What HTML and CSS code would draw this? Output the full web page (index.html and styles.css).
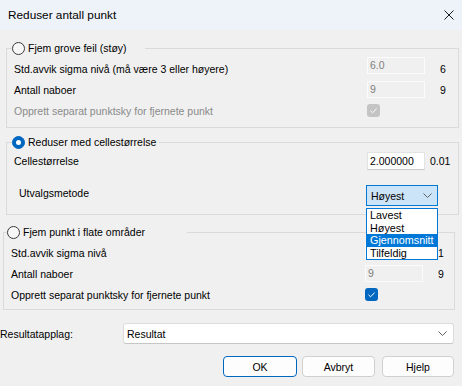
FILE: index.html
```html
<!DOCTYPE html>
<html lang="no">
<head>
    <meta charset="UTF-8">
    <meta name="viewport" content="width=device-width, initial-scale=1.0">
    <title>Reduser antall punkt</title>
    <link rel="stylesheet" href="styles.css">
</head>
<body>
    <div class="dialog">
        <div class="titlebar">
            <span class="title">Reduser antall punkt</span>
            <svg class="close" width="10" height="10" viewBox="0 0 10 10">
                <path d="M0.5 0.5 L9.5 9.5 M9.5 0.5 L0.5 9.5" stroke="#1a1a1a" stroke-width="1" fill="none"/>
            </svg>
        </div>

        <div class="content">
            <!-- Gruppe 1 -->
            <fieldset class="group g1">
                <legend class="legend l1"><span class="radio"></span>Fjem grove feil (støy)</legend>
                <div class="row">
                    <span class="label">Std.avvik sigma nivå (må være 3 eller høyere)</span>
                    <span class="field disabled up">6.0</span>
                    <span class="value">6</span>
                </div>
                <div class="row">
                    <span class="label">Antall naboer</span>
                    <span class="field disabled">9</span>
                    <span class="value">9</span>
                </div>
                <div class="row">
                    <span class="label muted">Opprett separat punktsky for fjernete punkt</span>
                    <span class="check-cell"><span class="check off"><svg width="13" height="13" viewBox="0 0 13 13"><path d="M3.5 6.8 L5.6 8.8 L9.6 4.6" stroke="#fff" stroke-width="1" fill="none"/></svg></span></span>
                    <span class="value"></span>
                </div>
            </fieldset>

            <!-- Gruppe 2 -->
            <fieldset class="group g2">
                <legend class="legend l2"><span class="radio on"></span>Reduser med cellestørrelse</legend>
                <div class="row r-cell">
                    <span class="label">Cellestørrelse</span>
                    <span class="field edit">2.000000</span>
                    <span class="value small">0.01</span>
                </div>
                <div class="row r-method">
                    <span class="label indent">Utvalgsmetode</span>
                    <div class="combo-wrap">
                        <div class="combo open">
                            <span>Høyest</span>
                            <svg width="9" height="5" viewBox="0 0 9 5"><path d="M0.5 0.5 L4.5 4.5 L8.5 0.5" stroke="#606060" fill="none"/></svg>
                        </div>
                        <ul class="droplist">
                            <li>Lavest</li>
                            <li>Høyest</li>
                            <li class="selected">Gjennomsnitt</li>
                            <li>Tilfeldig</li>
                        </ul>
                    </div>
                    <span class="spacer"></span>
                </div>
            </fieldset>

            <!-- Gruppe 3 -->
            <fieldset class="group g3">
                <legend class="legend l3"><span class="radio"></span>Fjem punkt i flate områder</legend>
                <div class="row">
                    <span class="label">Std.avvik sigma nivå</span>
                    <!-- feltet ligger skjult under nedtrekkslisten -->
                    <span class="field disabled up"></span>
                    <span class="value">1</span>
                </div>
                <div class="row">
                    <span class="label">Antall naboer</span>
                    <span class="field disabled">9</span>
                    <span class="value">9</span>
                </div>
                <div class="row">
                    <span class="label">Opprett separat punktsky for fjernete punkt</span>
                    <span class="check-cell"><span class="check on"><svg width="13" height="13" viewBox="0 0 13 13"><path d="M3.5 6.8 L5.6 8.8 L9.6 4.6" stroke="#fff" stroke-width="1" fill="none"/></svg></span></span>
                    <span class="value"></span>
                </div>
            </fieldset>

            <div class="result-row">
                <span class="result-label">Resultatapplag:</span>
                <div class="combo plain">
                    <span>Resultat</span>
                    <svg width="9" height="5" viewBox="0 0 9 5"><path d="M0.5 0.5 L4.5 4.5 L8.5 0.5" stroke="#606060" fill="none"/></svg>
                </div>
            </div>

            <div class="buttons">
                <button class="btn default">OK</button>
                <button class="btn cancel">Avbryt</button>
                <button class="btn help">Hjelp</button>
            </div>
        </div>
    </div>
</body>
</html>
```

FILE: styles.css
```css
* {
    box-sizing: border-box;
}

body {
    margin: 0;
    font-family: "Liberation Sans", Arial, sans-serif;
    font-size: 10.5px;
    color: #000;
    background-color: #f0f0f0;
}

.dialog {
    width: 462px;
    height: 386px;
    background-color: #f0f0f0;
    overflow: hidden;
}

.titlebar {
    height: 30px;
    background-color: #eef3f9;
    display: flex;
    justify-content: space-between;
    align-items: center;
    padding: 0 8px;
}

.title {
    font-size: 11.8px;
    color: #000;
}

.content {
    padding-top: 11px;
}

/* gruppebokser */
.group {
    margin: 0;
    padding: 0 0 6px 0;
    border: 1px solid #dadada;
    min-width: 0;
}

.g1 {
    margin-left: 6px;
    width: 453px;
}

.g2 {
    margin-left: 6px;
    margin-top: 7px;
    width: 453px;
    padding-top: 1px;
    padding-bottom: 7px;
}

.g3 {
    margin-left: 3px;
    margin-top: 10px;
    width: 452px;
    padding-bottom: 4px;
}

.legend {
    display: flex;
    align-items: center;
    height: 14px;
    padding: 0;
    margin-left: 5px;
    line-height: 14px;
}

.l1 { padding-right: 18px; }
.l2 { padding-right: 3px; }
.l3 { margin-left: 3px; padding-right: 42px; }

.radio {
    width: 13px;
    height: 13px;
    border: 1px solid #3a3a3a;
    border-radius: 50%;
    background-color: #f7f7f7;
    margin-right: 3px;
    position: relative;
}

.radio.on {
    border-color: #0067c0;
    background-color: #0067c0;
}

.radio.on::after {
    content: "";
    position: absolute;
    left: 3px;
    top: 3px;
    width: 5px;
    height: 5px;
    border-radius: 50%;
    background-color: #fff;
}

.row {
    display: flex;
    align-items: center;
    height: 21px;
    padding-left: 7px;
}

.g1 .row:first-of-type,
.g3 .row:first-of-type {
    margin-top: 3px;
}

.label {
    flex: 1;
    white-space: nowrap;
}

.label.indent {
    padding-left: 5px;
    margin-bottom: 5px;
}

.muted {
    color: #8a8a8a;
}

.field {
    width: 58px;
    height: 17px;
    line-height: 15px;
    padding-left: 2px;
    border: 1px solid #fbfbfb;
}

.field.up {
    margin-bottom: 6px;
}

.field.disabled {
    background-color: #f0f0f0;
    color: #808080;
}

.field.edit {
    height: 18px;
    line-height: 16px;
    background-color: #fff;
    border: 1px solid #e3e3e3;
    border-bottom-color: #c8c8c8;
}

.value {
    width: 33px;
    padding-left: 15px;
}

.g3 .value {
    width: 31px;
}

.value.small {
    padding-left: 5px;
}

.check-cell {
    width: 58px;
    display: flex;
}

.check {
    width: 13px;
    height: 13px;
    border-radius: 3px;
    display: flex;
}

.check.off {
    background-color: #c4c4c4;
}

.check.on {
    background-color: #0067c0;
}

/* utvalgsmetode */
.r-method {
    margin-top: 13px;
    height: 23px;
}

.combo-wrap {
    position: relative;
    width: 72px;
    margin-left: -1px;
}

.combo {
    display: flex;
    justify-content: space-between;
    align-items: center;
    height: 21px;
    padding: 0 5px 0 4px;
}

.combo.open {
    background-color: #cce4f7;
    border: 1px solid #0078d4;
}

.spacer {
    width: 20px;
}

.droplist {
    position: absolute;
    top: 23px;
    left: 0;
    width: 72px;
    margin: 0;
    padding: 0;
    list-style: none;
    background-color: #fff;
    border: 1px solid #0078d7;
    z-index: 10;
}

.droplist li {
    height: 12.5px;
    line-height: 12.5px;
    padding-left: 3px;
    font-size: 10.8px;
}

.droplist li.selected {
    background-color: #0078d7;
    color: #fff;
}

/* resultat */
.result-row {
    display: flex;
    align-items: center;
    margin-top: 13px;
    height: 21px;
}

.result-label {
    width: 123px;
}

.combo.plain {
    width: 331px;
    background-color: #fff;
    border: 1px solid #dcdcdc;
    border-bottom-color: #c6c6c6;
    border-radius: 3px;
    padding: 0 6px 0 3px;
}

.buttons {
    display: flex;
    justify-content: flex-end;
    margin-top: 12px;
    padding-right: 8px;
}

.btn {
    height: 21px;
    font-family: "Liberation Sans", Arial, sans-serif;
    font-size: 10.5px;
    color: #000;
    background-color: #fdfdfd;
    border: 1px solid #d0d0d0;
    border-radius: 4px;
    padding: 0;
}

.default {
    width: 74px;
    border-color: #0067c0;
}

.cancel {
    width: 73px;
    margin-left: 5px;
}

.help {
    width: 72px;
    margin-left: 7px;
}
```
